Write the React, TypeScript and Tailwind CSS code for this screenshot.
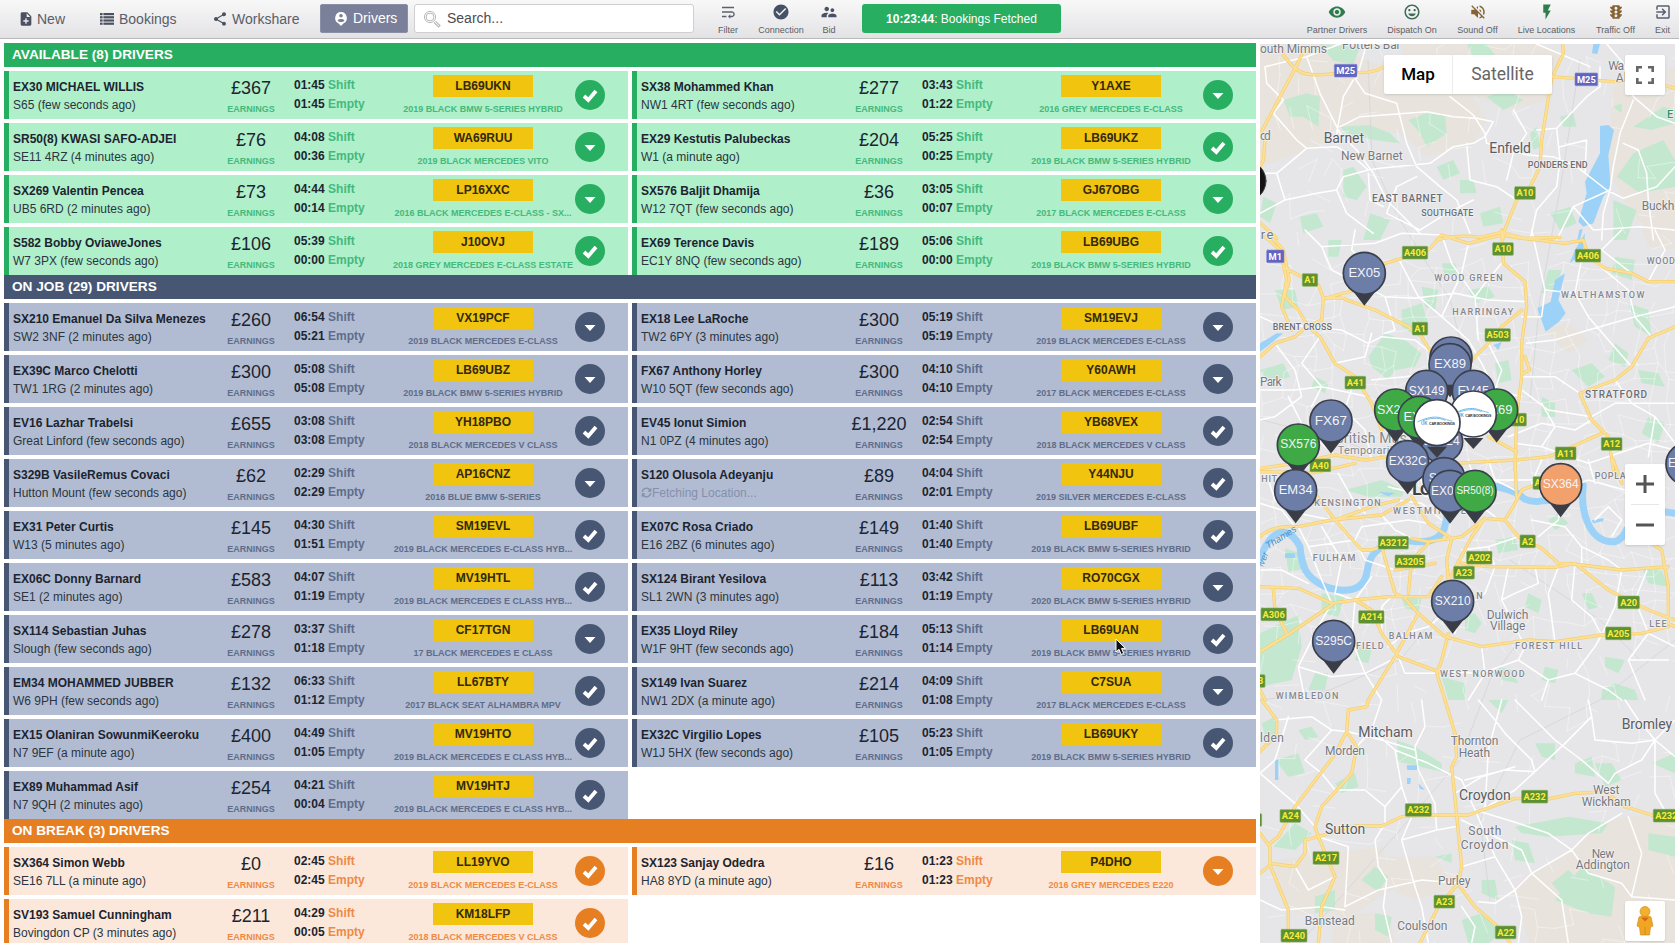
import React from "react";
import {
  MdCheckCircle,
  MdExitToApp,
  MdFlashOn,
  MdMood,
  MdNoteAdd,
  MdShare,
  MdSupervisorAccount,
  MdTraffic,
  MdVisibility,
  MdVolumeOff,
  MdWrapText,
} from "react-icons/md";

type Driver = {
  name: string;
  loc: string;
  pay: string;
  shift: string;
  empty: string;
  plate: string;
  car: string;
  ok: boolean;
};

const d = (name: string, loc: string, pay: string, shift: string, empty: string, plate: string, car: string, mark: string): Driver => ({
  name, loc, pay, shift, empty, plate, car, ok: mark === "check",
});

const available: Driver[] = [
  d("EX30 MICHAEL WILLIS", "S65 (few seconds ago)", "£367", "01:45", "01:45", "LB69UKN", "2019 BLACK BMW 5-SERIES HYBRID", "check"),
  d("SX38 Mohammed Khan", "NW1 4RT (few seconds ago)", "£277", "03:43", "01:22", "Y1AXE", "2016 GREY MERCEDES E-CLASS", "down"),
  d("SR50(8) KWASI SAFO-ADJEI", "SE11 4RZ (4 minutes ago)", "£76", "04:08", "00:36", "WA69RUU", "2019 BLACK MERCEDES VITO", "down"),
  d("EX29 Kestutis Palubeckas", "W1 (a minute ago)", "£204", "05:25", "00:25", "LB69UKZ", "2019 BLACK BMW 5-SERIES HYBRID", "check"),
  d("SX269 Valentin Pencea", "UB5 6RD (2 minutes ago)", "£73", "04:44", "00:14", "LP16XXC", "2016 BLACK MERCEDES E-CLASS - SX...", "down"),
  d("SX576 Baljit Dhamija", "W12 7QT (few seconds ago)", "£36", "03:05", "00:07", "GJ67OBG", "2017 BLACK MERCEDES E-CLASS", "down"),
  d("S582 Bobby OviaweJones", "W7 3PX (few seconds ago)", "£106", "05:39", "00:00", "J10OVJ", "2018 GREY MERCEDES E-CLASS ESTATE", "check"),
  d("EX69 Terence Davis", "EC1Y 8NQ (few seconds ago)", "£189", "05:06", "00:00", "LB69UBG", "2019 BLACK BMW 5-SERIES HYBRID", "check"),
];

const onJob: Driver[] = [
  d("SX210 Emanuel Da Silva Menezes", "SW2 3NF (2 minutes ago)", "£260", "06:54", "05:21", "VX19PCF", "2019 BLACK MERCEDES E-CLASS", "down"),
  d("EX18 Lee LaRoche", "TW2 6PY (3 minutes ago)", "£300", "05:19", "05:19", "SM19EVJ", "2019 BLACK MERCEDES E-CLASS", "down"),
  d("EX39C Marco Chelotti", "TW1 1RG (2 minutes ago)", "£300", "05:08", "05:08", "LB69UBZ", "2019 BLACK BMW 5-SERIES HYBRID", "down"),
  d("FX67 Anthony Horley", "W10 5QT (few seconds ago)", "£300", "04:10", "04:10", "Y60AWH", "2017 BLACK MERCEDES E-CLASS", "down"),
  d("EV16 Lazhar Trabelsi", "Great Linford (few seconds ago)", "£655", "03:08", "03:08", "YH18PBO", "2018 BLACK MERCEDES V CLASS", "check"),
  d("EV45 Ionut Simion", "N1 0PZ (4 minutes ago)", "£1,220", "02:54", "02:54", "YB68VEX", "2018 BLACK MERCEDES V CLASS", "check"),
  d("S329B VasileRemus Covaci", "Hutton Mount (few seconds ago)", "£62", "02:29", "02:29", "AP16CNZ", "2016 BLUE BMW 5-SERIES", "down"),
  d("S120 Olusola Adeyanju", "", "£89", "04:04", "02:01", "Y44NJU", "2019 SILVER MERCEDES E-CLASS", "check"),
  d("EX31 Peter Curtis", "W13 (5 minutes ago)", "£145", "04:30", "01:51", "SM19EVL", "2019 BLACK MERCEDES E-CLASS HYB...", "check"),
  d("EX07C Rosa Criado", "E16 2BZ (6 minutes ago)", "£149", "01:40", "01:40", "LB69UBF", "2019 BLACK BMW 5-SERIES HYBRID", "check"),
  d("EX06C Donny Barnard", "SE1 (2 minutes ago)", "£583", "04:07", "01:19", "MV19HTL", "2019 BLACK MERCEDES E CLASS HYB...", "check"),
  d("SX124 Birant Yesilova", "SL1 2WN (3 minutes ago)", "£113", "03:42", "01:19", "RO70CGX", "2020 BLACK BMW 5-SERIES HYBRID", "down"),
  d("SX114 Sebastian Juhas", "Slough (few seconds ago)", "£278", "03:37", "01:18", "CF17TGN", "17 BLACK MERCEDES E CLASS", "down"),
  d("EX35 Lloyd Riley", "W1F 9HT (few seconds ago)", "£184", "05:13", "01:14", "LB69UAN", "2019 BLACK BMW 5-SERIES HYBRID", "check"),
  d("EM34 MOHAMMED JUBBER", "W6 9PH (few seconds ago)", "£132", "06:33", "01:12", "LL67BTY", "2017 BLACK SEAT ALHAMBRA MPV", "check"),
  d("SX149 Ivan Suarez", "NW1 2DX (a minute ago)", "£214", "04:09", "01:08", "C7SUA", "2017 BLACK MERCEDES E-CLASS", "down"),
  d("EX15 Olaniran SowunmiKeeroku", "N7 9EF (a minute ago)", "£400", "04:49", "01:05", "MV19HTO", "2019 BLACK MERCEDES E CLASS HYB...", "check"),
  d("EX32C Virgilio Lopes", "W1J 5HX (few seconds ago)", "£105", "05:23", "01:05", "LB69UKY", "2019 BLACK BMW 5-SERIES HYBRID", "check"),
  d("EX89 Muhammad Asif", "N7 9QH (2 minutes ago)", "£254", "04:21", "00:04", "MV19HTJ", "2019 BLACK MERCEDES E CLASS HYB...", "check"),
];

const onBreak: Driver[] = [
  d("SX364 Simon Webb", "SE16 7LL (a minute ago)", "£0", "02:45", "02:45", "LL19YVO", "2019 BLACK MERCEDES E-CLASS", "check"),
  d("SX123 Sanjay Odedra", "HA8 8YD (a minute ago)", "£16", "01:23", "01:23", "P4DHO", "2016 GREY MERCEDES E220", "down"),
  d("SV193 Samuel Cunningham", "Bovingdon CP (3 minutes ago)", "£211", "04:29", "00:05", "KM18LFP", "2018 BLACK MERCEDES V CLASS", "check"),
];

type Theme = { bar: string; card: string; soft: string; dot: string };

const green: Theme = { bar: "bg-[#27ae60]", card: "border-[#27ae60] bg-[#afefca]", soft: "text-[#45b97c]", dot: "bg-[#27ae60]" };
const navy: Theme = { bar: "bg-[#475673]", card: "border-[#475673] bg-[#b1bcd2]", soft: "text-[#5f6c8a]", dot: "bg-[#475673]" };
const orange: Theme = { bar: "bg-[#e67e22]", card: "border-[#e67e22] bg-[#fbe8da]", soft: "text-[#ee8a45]", dot: "bg-[#e67e22]" };

function Card({ v, t }: { v: Driver; t: Theme }) {
  return (
    <div className={`flex h-12 items-center border-l-[5px] pl-1 text-[12px] text-[#1c2430] ${t.card}`}>
      <div className="flex w-[208px] flex-col gap-[2px] whitespace-nowrap pt-px leading-4">
        <span className="font-bold">{v.name}</span>
        {v.loc ? (
          <span className="text-[#2b3540]">{v.loc}</span>
        ) : (
          <span className="flex items-center text-[#8490aa]">
            <svg viewBox="0 0 24 24" className="h-[11px] w-[11px]" fill="none" stroke="currentColor" strokeWidth="3">
              <path d="M3 11a9 9 0 0 1 16-5l2 3M21 3v6h-6M21 13a9 9 0 0 1-16 5l-2-3M3 21v-6h6" />
            </svg>
            Fetching Location...
          </span>
        )}
      </div>
      <div className="flex w-[60px] flex-col items-center">
        <span className="text-[18px] leading-6">{v.pay}</span>
        <span className={`pt-[3px] text-[9px] font-bold leading-3 ${t.soft}`}>EARNINGS</span>
      </div>
      <div className="flex w-[111px] flex-col gap-[2px] pl-[13px] font-bold leading-[17px]">
        <span>{v.shift} <span className={t.soft}>Shift</span></span>
        <span>{v.empty} <span className={t.soft}>Empty</span></span>
      </div>
      <div className="flex w-[182px] flex-col items-center gap-[6px]">
        <span className="flex h-[22px] w-[100px] items-center justify-center bg-[#f1c40f] pb-px font-bold text-[#33290c]">{v.plate}</span>
        <span className={`whitespace-nowrap text-[9px] font-bold leading-3 ${t.soft}`}>{v.car}</span>
      </div>
      <div className={`ml-px flex size-[30px] items-center justify-center rounded-full ${t.dot}`}>
        {v.ok ? (
          <svg viewBox="0 0 20 20" className="size-5" fill="none" stroke="#fff" strokeWidth="3.8">
            <path d="M4 11 L8.300 15 L16 6" />
          </svg>
        ) : (
          <svg viewBox="0 0 20 20" className="size-5" fill="#fff">
            <path d="M4.5 8h11L10 14z" />
          </svg>
        )}
      </div>
    </div>
  );
}

function Section({ title, rows, t }: { title: string; rows: Driver[]; t: Theme }) {
  return (
    <section className="flex shrink-0 flex-col gap-1">
      <h2 className={`flex h-6 items-center pl-2 text-[13.65px] font-bold text-white ${t.bar}`}>{title}</h2>
      <div className="grid grid-cols-2 gap-1">
        {rows.map((v) => (
          <Card key={v.name} v={v} t={t} />
        ))}
      </div>
    </section>
  );
}

function Tool({ icon, label, box, tint }: { icon: React.ReactNode; label: string; box: string; tint: string }) {
  return (
    <div className={`flex shrink-0 flex-col items-center gap-[2px] whitespace-nowrap pt-[3px] ${box}`}>
      <span className={`text-[18px] ${tint}`}>{icon}</span>
      <span className="text-[9px] leading-[14px] text-[#5b5e66]">{label}</span>
    </div>
  );
}

function Header() {
  return (
    <header className="flex h-[39px] shrink-0 items-start border-b border-[#b9b9bb] bg-linear-to-b from-[#f8f8f9] to-[#e3e3e5] text-[14px] text-[#595d68]">
      <div className="flex h-[38px] w-20 items-center gap-[3px] pl-[18px]">
        <MdNoteAdd className="h-[16px] w-[16px] text-[#4b5160]" />
        <span>New</span>
      </div>
      <div className="flex h-[38px] w-[114px] items-center gap-[5px] pl-5">
        <svg viewBox="0 0 14 12" className="h-3 w-3.5 fill-[#4b5160]">
          {[0, 3.2, 6.4, 9.6].map((y) => (
            <g key={y}>
              <rect x="0" y={y} width="2.6" height="2.2" />
              <rect x="3.4" y={y} width="10.6" height="2.2" />
            </g>
          ))}
        </svg>
        <span>Bookings</span>
      </div>
      <div className="flex h-[38px] w-[126px] items-center gap-[4px] pl-[18px]">
        <MdShare className="h-4 w-4 text-[#4b5160]" />
        <span>Workshare</span>
      </div>
      <div className="mt-1 flex h-[29px] w-[88px] items-center gap-[6px] rounded-[2px] border border-[#8b8fa6] bg-[#7a7f9a] pl-[14px] text-white">
        <svg viewBox="0 0 12 14" className="h-3.5 w-3">
          <path d="M6 0a6 6 0 0 1 2.4 11.4L6 14 3.6 11.4A6 6 0 0 1 6 0z" fill="#fff" />
          <circle cx="6" cy="3.7" r="1.8" fill="#7a7f9a" />
          <path d="M2.6 8.4C3 6.4 9 6.4 9.4 8.4 8.2 10.4 3.8 10.4 2.6 8.4z" fill="#7a7f9a" />
        </svg>
        <span>Drivers</span>
      </div>
      <div className="ml-[6px] mt-1 flex h-[29px] w-[280px] shrink-0 items-center gap-[6px] rounded-[3px] border border-[#cfcfd2] bg-white pl-2">
        <svg viewBox="0 0 18 18" className="size-[18px]" fill="none" stroke="#b9b9bd">
          <circle cx="7" cy="7" r="5.6" strokeWidth="1" />
          <circle cx="7" cy="7" r="3.9" strokeWidth="1" />
          <path d="M11 12.5l4.6 4.4 1.4-1.4-4.6-4.4" strokeWidth="1.2" />
        </svg>
        <span className="text-[#4c4c50]">Search...</span>
      </div>
      <Tool box="ml-[13px] w-[42px]" tint="text-[#5b6070]" label="Filter" icon={<MdWrapText />} />
      <Tool box="w-[64px]" tint="text-[#475166]" label="Connection" icon={<MdCheckCircle />} />
      <Tool box="w-[32px]" tint="text-[#4b5160]" label="Bid" icon={<MdSupervisorAccount />} />
      <div className="ml-[17px] mt-1 flex h-[29px] w-[199px] shrink-0 items-center justify-center rounded-[3px] bg-[#27ae60] text-[12px] text-white">
        <b>10:23:44</b>: Bookings Fetched
      </div>
      <Tool box="ml-auto w-20" tint="text-[#2f7d4f]" label="Partner Drivers" icon={<MdVisibility />} />
      <Tool box="w-[70px]" tint="text-[#3d6b55]" label="Dispatch On" icon={<MdMood />} />
      <Tool box="w-[61px]" tint="text-[#856332]" label="Sound Off" icon={<MdVolumeOff />} />
      <Tool box="w-[77px]" tint="text-[#2f7d4f]" label="Live Locations" icon={<MdFlashOn />} />
      <Tool box="w-[61px]" tint="text-[#856332]" label="Traffic Off" icon={<MdTraffic />} />
      <Tool box="w-[33px]" tint="text-[#5b6070]" label="Exit" icon={<MdExitToApp />} />
    </header>
  );
}

/* The map is drawn as four stacked tiles, each on a grid three times finer than the page. */
type TileKey = "A" | "B" | "C" | "D";
const origin: Record<TileKey, [number, number]> = { A: [1240, 0], B: [1255, 230], C: [1255, 460], D: [1255, 700] };
const px = (k: TileKey, x: number) => origin[k][0] + x / 3;
const py = (k: TileKey, y: number) => origin[k][1] + y / 3;

const sand: Record<TileKey, string[]> = {
  A: ["M60 132H240L400 190 560 210 700 290 740 360 700 430 560 470 480 400 300 380 230 440 60 500z", "M480 132H900L960 160 930 300 800 330 640 260 500 200z", "M1120 260L1305 200V720H1240L1150 600 1100 500z"],
  B: ["M870 300l70-20 60 50-60 40z", "M1160 0h100v60l-80-10z"],
  C: [],
  D: ["M60 480L380 440 420 560 300 640 120 640 60 560z", "M780 560L960 440 1060 360 1260 330V729H820z", "M400 470h140l60 90-120 40-90-40z", "M240 640h160l20 89H230z"],
};
const parks: Record<TileKey, string[]> = {
  A: [
    "M130 300L200 280 240 290 235 380 190 350 150 350z", "M300 380L390 375 450 400 480 430 400 420 320 400z", "M505 360L560 340 615 345 620 400 560 440 540 400z",
    "M310 510L340 500 380 560 350 600 310 590z", "M240 132l120 10-20 50-60-10z", "M740 290l60-20 50 30-60 30z", "M680 132h60l30 40-60 20z", "M870 400l20-20 10 60-20 10z",
    "M1180 460L1270 420 1305 480V560L1200 580 1130 530z", "M1180 380l90-60 35 10v40l-70 20z", "M1120 320l25-10v30z", "M960 350l40-10 10 40-40 0z", "M590 500l50-20 20 40-50 20z",
    "M390 640l60 20-30 60h-50z", "M720 640l60-20 10 50-60 10z", "M930 640l60-20 20 50-50 20z", "M70 590l40 20-20 60-30-20z", "M180 650l50-10 20 40-60 20z", "M1120 600l70 30-30 90h-40z", "M660 540l40 0 10 40-50 0z",
  ],
  B: [
    "M340 380L390 310 450 330 500 370 480 410 420 420 400 450 350 410z", "M440 240l60-20 20 60-50 30-30-20z", "M15 420l70-20 20 40-60 20z", "M60 180l60 0 10 50-50 10z", "M220 30l40 0-10 50-30 0z", "M500 170l50 10-10 60-30-10z",
    "M180 440l40 20-10 30-40-20z", "M950 420l60-20 40 40-50 30z", "M1080 340l40 30-10 40-50-20z", "M880 120l40 0-20 60-40 10z", "M1120 220l60 20 10 80-50-30z", "M720 400l40-10 10 60-40 10z", "M1180 560l50 20-20 60-50-30z",
    "M860 500l40 20 0 40-40 0z", "M560 100l40 0 10 30-40 10z", "M640 180l60-10 20 30-60 20z", "M1080 80l60 10-10 60-60-20z", "M1150 420l60 10 20 40-70-10z",
  ],
  C: [
    "M270 90L380 60 450 90 440 110 340 110z", "M440 415l60 0-10 40-40-10z", "M90 265l60 20 10 40-60 10z", "M15 520L130 465 140 560 110 660 15 680z", "M200 400l70 10-20 60-50-10z", "M630 470l30-10 20 30-20 30-30-10z",
    "M720 240l60-10 10 40-60 10z", "M820 400l40 20-10 40-40-20z", "M1040 690l40-20 60 20 10 30h-110z", "M980 400l30 0 20 40-30 10z", "M1050 590l60 10-20 40-40-20z", "M1160 320l60 10 20 50-60-10z", "M560 650l70 20 0 50h-50z",
    "M870 620l40 10-10 40-40-10z", "M310 560l40 10-10 40-40-10z", "M730 620l40 10 20 40-50-10z", "M880 180l30-20 30 30-40 20z", "M180 640l40 0-10 50-50 0z",
  ],
  D: [
    "M425 120L480 140 560 190 560 215 430 185z", "M55 440L120 370 170 400 120 450z", "M320 540L360 500 400 530 370 575z", "M890 550L940 510 960 530 920 585z", "M900 600L980 500 1080 560 1070 650 1000 640z", "M780 380L940 350 1060 370 1040 400 880 410 800 400z",
    "M60 180l70-20 20 60-50 10z", "M240 250l60-30 10 40-50 20z", "M680 540l40 0 10 60-50-20z", "M770 420l50 10 20 60-60-10z", "M1020 190l50 0 30 50-50 20z", "M20 70l40-20 10 50-30 40z", "M700 0h60l-20 40z", "M840 130l60 0 0 50-40-10z",
    "M960 190l50-20 10 60-60-10z", "M180 590l60-20 0 60-60 10z", "M620 660l60-20 60 60-40 29h-60z", "M1180 400l80 10v60l-80-20z", "M130 90l40-10 20 30-40 10z", "M360 640l50 10-10 60-40-20z", "M1120 640l60-20 40 40-50 40z", "M540 470l50-10 0 30z", "M1190 190l70-30v60z",
  ],
};
const lakes: Record<TileKey, string[]> = {
  A: ["M1080 378L1105 375 1122 390 1105 465 1112 560 1090 590 1060 670 1030 680 1015 665 1040 580 1035 545 1080 460z", "M1060 132h20l-8 30-16-2z", "M1018 690l10-4-8 34h-8z"],
  B: ["M900 150l30-20-20 80 22 40-20 25-40 30-25-70 40-20z", "M15 340l50-30 20 0-50 40-20 15z", "M960 60l30-50-6 60-40 30z", "M715 345l25-10-10 25z"],
  C: ["M90 280h30v14h-30z", "M370 95l50 4-20 10z", "M1010 180l36-6-2 10-30 6z"],
  D: ["M455 196h32v14h-30z", "M456 234h12l-2 18h-10z", "M490 250l20 20-16-4z", "M60 180l10 0 0 60-10 0z"],
};
const yellow: Record<TileKey, string[]> = {
  A: ["M130 165Q165 215 200 222T330 215Q390 225 435 200", "M185 165L160 215 62 400M75 420L70 480 60 500", "M935 230L1120 245Q1220 235 1305 265", "M968 132L970 160 935 235 905 420 900 500 870 560 830 600 790 700 788 720", "M590 720Q650 702 720 712L785 697 850 715 960 712", "M60 668L110 715"],
  B: [
    "M30 20L75 60 95 150 80 230 110 300M48 18L85 60 103 150 88 200", "M90 115L190 165 205 203 270 205", "M205 205L200 270 155 290 120 320 60 340 15 380", "M90 200L130 240 160 290 195 320 240 400 300 440 350 520 380 600",
    "M210 205L300 180 390 100 440 85 520 60 560 15 640 40 740 15 800 25 930 40 985 30 1000 80 1050 115 1130 130 1180 155 1260 155", "M270 208L360 240 460 290 500 320 530 370",
    "M740 0L745 100 810 155 815 230 800 340 800 440 785 560 780 720", "M800 240L740 290 700 340 650 390", "M1260 290L1180 325 1130 410 1080 450 1000 480 975 490 1010 570 1060 620 1075 720",
    "M600 700L780 690 880 680 930 660 1040 610", "M15 715L120 700 240 675 330 690 400 680", "M810 380l14 40-20 10", "M700 620L785 665",
  ],
  C: [
    "M15 35L180 38 300 10", "M15 230Q50 195 130 200L230 180 380 165 460 120", "M160 75L240 180 320 270 350 270", "M240 180L350 140 430 120", "M350 270L380 260 420 400 440 410", "M470 110L520 190 590 235 620 230 690 175 750 180 780 130 800 90 840 75",
    "M470 235L520 245 590 235", "M590 235L575 300 580 360", "M560 400L650 230 690 175", "M750 180L790 230 860 265 910 310 980 315 1100 330 1240 320", "M620 310L700 320 900 322 960 310 1060 390 1180 450 1260 480", "M520 250L470 300 460 400",
    "M15 380L130 385 230 430 300 420 400 410 520 410 560 350", "M15 575L120 510 230 435", "M300 420L350 450 380 520 430 590 550 635", "M450 415L490 460 570 530 680 560 820 540 900 545 1040 525 1160 520 1240 500",
    "M490 460L420 590 340 720", "M580 520L560 600 545 640 570 720", "M1190 250L1220 270 1240 380 1240 490 1260 500", "M55 385L60 450 95 520", "M780 0L785 120", "M1075 0L1100 70", "M15 690L30 720", "M540 310L420 330",
  ],
  D: [
    "M20 0L65 60 65 100 15 155", "M340 0L335 20 280 30 275 95 235 170 120 320 70 410 45 430", "M275 95L305 140 290 220 200 320 180 380 190 410 240 530 200 620 190 729",
    "M15 400L45 440 45 490 120 500 150 460 150 420 190 410 300 378 380 378 440 350 540 345 640 345 780 295 880 297 960 280 1050 275 1110 320 1190 345 1260 350",
    "M15 520L45 495 100 630 100 729", "M570 0L600 100 605 170 590 200 605 345 620 500 610 550 550 620 495 729", "M615 560L660 620 740 690 765 729",
  ],
};
const white: Record<TileKey, string[]> = {
  A: [
    "M75 200L80 250 130 300 100 340 170 420 200 445 290 440 340 470 385 510 420 505 570 490 640 440 700 430 735 410 760 365 710 355", "M200 170L240 280 300 400 350 450 400 520 440 600 540 700", "M340 240L310 290 290 400",
    "M345 235L375 280 470 310 500 430 530 500 600 560 650 600 690 700", "M300 380L360 350 560 335 640 350 710 355", "M630 290L700 345 735 400 740 430 860 465 940 470 1010 500 1100 570 1150 595 1250 560 1305 500",
    "M60 520L110 520 200 445", "M110 520L135 600 230 580 290 570 310 530 385 510", "M135 600L60 640", "M890 132L1050 200", "M1100 132L1150 190 1180 290 1250 350 1305 370", "M1180 300L1140 400 1120 500 1110 570 1090 640 1085 720",
    "M890 390L950 385 1040 290 1080 260 1080 200", "M950 385L960 480 950 560 890 630 870 720", "M1035 520L1040 420 960 440", "M1150 430L1195 450 1220 520 1225 600 1240 720", "M1110 570L1000 620 950 720", "M680 430L690 540 770 560 830 600",
    "M430 620L390 600 385 520", "M530 530L470 560 440 640 540 690 620 640 700 600", "M290 570L320 640 400 700", "M820 330L860 400 820 460 800 540", "M1000 620L1060 690 1200 680 1305 690", "M75 200L200 170 300 132", "M380 132L350 235",
  ],
  B: [
    "M150 0L200 50 360 40 440 10 560 15", "M200 50L230 120 390 200 420 300 390 310", "M430 85L490 200 560 260 640 330 680 400", "M560 15L590 100 660 200 670 330", "M640 40L620 130 560 260", "M815 215L700 210 600 190 480 205 390 200", "M830 0L870 180 860 260 800 260",
    "M740 100L690 160 660 200", "M870 180L960 190 1000 260 1060 330 1130 410", "M985 60L960 190", "M1000 80L1120 180 1140 260 1190 320", "M1260 230L1140 260 1000 300", "M815 340L900 330 1000 300", "M800 440L900 440 975 490", "M800 480L880 540 1010 560 1080 520 1260 520",
    "M1080 450L1130 520 1200 560 1260 640", "M160 290L260 300 340 340 380 320 480 330 530 370", "M15 260L60 280 160 290", "M60 340L120 420 140 500 60 560 15 570", "M195 320L140 400 200 470 170 530", "M240 400L330 380 350 310", "M350 450L450 440 520 430", "M15 480L120 480 200 470 340 500",
    "M300 440L270 540 330 600 350 690", "M680 400L720 480 800 500", "M700 340L740 420 720 480", "M760 620L860 580 960 600 1010 570", "M780 640L860 650 900 590 860 520", "M860 650L1000 700 1180 640 1260 660", "M1100 0L1040 60 1130 130", "M1180 155L1230 60 1200 0", "M300 0L290 60 330 100", "M100 500L150 600 240 675", "M1200 560L1180 680",
  ],
  C: [
    "M40 60L60 120 130 160 230 180", "M250 40L300 130 330 160", "M15 130L80 150 120 200", "M130 200L160 260 200 360 230 430", "M200 200L260 300 240 400 300 420", "M300 240L330 300 420 330", "M160 260L300 240 320 200 460 180 520 190",
    "M380 165L420 210 470 235", "M420 120L500 130 560 180", "M420 400L380 440 380 520", "M15 330L80 330 160 370", "M230 430L190 500 130 620 150 720", "M300 420L290 540 330 640 430 590", "M130 620L230 650 330 640 380 720", "M350 350L300 420",
    "M620 270L700 260 790 230", "M700 260L720 320 690 400 620 450 600 520", "M760 320L740 420 800 540", "M840 320L850 370 780 400 740 420", "M910 322L880 400 900 545", "M960 310L950 420 1010 470 1040 525", "M1100 330L1080 440 1040 525", "M1180 320L1140 420 1180 520 1120 600 1170 720",
    "M830 180L930 200 980 260 980 315", "M930 60L910 180 850 230", "M980 260L1060 300 1100 330", "M680 560L690 640 640 720", "M550 635L680 640 790 600 820 540", "M790 600L880 660 960 640 1020 560 1040 525", "M880 660L860 720", "M960 640L1060 690 1100 720", "M430 590L450 640 545 640",
    "M590 20L700 60 820 60 950 50", "M640 0L680 140 720 170", "M700 0L720 60 780 90", "M860 0L830 70 880 110", "M900 100L1000 60 1110 90", "M1000 0L1020 70", "M1020 180L1060 140 1100 180 1070 230", "M480 20L520 110 600 120", "M400 80L520 110", "M1260 560L1180 520", "M1240 600L1120 600", "M580 450L520 500 450 520 400 560",
  ],
  D: [
    "M60 60L170 50 230 90 280 95", "M230 90L150 180 200 220 240 270 330 270 390 320 390 370 360 420 370 500 395 540 385 620 410 729", "M380 0L350 90 420 150 440 260 390 320", "M350 90L305 140", "M420 150L520 190 620 240 660 330", "M500 0L510 80 480 140 490 210 540 310 545 390",
    "M440 260L470 350 440 420 545 390 600 380", "M670 0L720 60 750 100 830 180 840 215 780 270 680 330", "M740 0L700 150 690 330", "M660 330L720 470 780 570 830 520 950 450 1000 400 1100 340", "M660 330L790 370 880 400 950 450", "M780 0L900 120 980 180 1060 250", "M840 215L930 130 1010 50 1000 0",
    "M1010 50L1020 120 1130 130 1200 120 1260 60", "M1200 120L1200 280 1240 350", "M1060 250L1080 220 1160 180 1200 120", "M1110 0L1150 60 1200 120 1260 170", "M15 220L120 310 180 380", "M190 410L280 440 270 620 370 570 500 540 610 550", "M15 600L80 630 200 620 270 630", "M440 420L480 560 500 620 520 729",
    "M620 500L720 470", "M780 570L720 610 670 605", "M780 570L800 650 790 729", "M830 520L920 600 940 729", "M950 450L1000 520 1100 550 1130 590 1260 600", "M1120 350L1160 460 1130 590", "M120 500L160 570 240 530", "M620 360L800 450 830 520", "M100 50L60 180 15 220", "M620 620L660 680 650 729", "M630 240L750 210 840 215", "M600 280L680 230 780 200", "M480 150L380 120 280 95",
  ],
};
const thames = "M8 310Q40 225 75 218T135 260C140 320 150 350 210 380C270 400 325 395 335 340C342 300 350 280 380 262Q430 235 480 245Q550 250 568 205L585 130Q610 70 700 75Q780 90 800 110T870 122Q950 120 985 75C975 150 1000 250 1080 245C1130 230 1120 130 1190 150L1262 160";

/* Deterministic web of side streets between the named roads. */
const streets = (() => {
  let s = 7;
  const rnd = () => ((s = (s * 16807) % 2147483647) / 2147483647);
  const step = 17;
  const cols = 26;
  const rowsN = 55;
  const pts: [number, number][][] = [];
  for (let r = 0; r < rowsN; r++) {
    pts.push([]);
    for (let c = 0; c < cols; c++) pts[r].push([1255 + c * step + rnd() * 13, 38 + r * step + rnd() * 13]);
  }
  let out = "";
  for (let r = 0; r < rowsN - 1; r++)
    for (let c = 0; c < cols - 1; c++) {
      const density = r > 12 && r < 35 ? 0.65 : 0.18;
      const [x, y] = pts[r][c];
      if (rnd() < density) out += `M${x.toFixed(1)} ${y.toFixed(1)}L${pts[r][c + 1][0].toFixed(1)} ${pts[r][c + 1][1].toFixed(1)}`;
      if (rnd() < density) out += `M${x.toFixed(1)} ${y.toFixed(1)}L${pts[r + 1][c][0].toFixed(1)} ${pts[r + 1][c][1].toFixed(1)}`;
    }
  return out;
})();

/* tile, left, right, baseline, text, size, weight, colour */
type Label = [TileKey, number, number, number, string, number, number, string];
const town = "#5b5d63";
const area = "#85878f";
const labels: Label[] = [
  ["A", 60, 261, 158, "outh Mimms", 12, 400, "#77797f"], ["A", 306, 482, 147, "Potters Bar", 12, 400, "#77797f"], ["A", 251, 372, 428, "Barnet", 14, 400, town], ["A", 303, 488, 480, "New Barnet", 12, 400, "#77797f"],
  ["A", 748, 873, 460, "Enfield", 14, 400, town], ["A", 863, 1043, 504, "PONDERS END", 9, 500, "#6c6e75"], ["A", 396, 608, 606, "EAST BARNET", 10, 500, "#6c6e75"], ["A", 544, 700, 648, "SOUTHGATE", 9, 500, "#6c6e75"],
  ["A", 1205, 1303, 631, "Buckh", 12, 400, "#77797f"], ["A", 1105, 1152, 210, "Wa", 12, 400, "#77797f"], ["A", 1127, 1160, 247, "Al", 12, 400, "#77797f"], ["A", 60, 92, 420, "od", 12, 400, "#77797f"], ["A", 62, 100, 716, "re", 13, 400, "#77797f"], ["A", 1281, 1300, 354, "E", 11, 500, "#3d8f62"],
  ["B", 538, 743, 152, "WOOD GREEN", 9, 500, area], ["B", 1175, 1260, 103, "WOOD", 9, 500, area], ["B", 918, 1168, 203, "WALTHAMSTOW", 9, 500, area], ["B", 592, 775, 256, "HARRINGAY", 9, 500, area], ["B", 53, 231, 299, "BRENT CROSS", 9, 500, "#6c6e75"], ["B", 990, 1176, 504, "STRATFORD", 10, 500, "#6c6e75"],
  ["B", 15, 80, 469, "Park", 12, 400, "#77797f"], ["B", 240, 455, 640, "British Mus", 14, 400, "#85868c"], ["B", 248, 412, 673, "Temporaril", 11, 400, "#85868c"],
  ["C", 19, 66, 66, "HIT", 9, 500, area], ["C", 178, 377, 138, "KENSINGTON", 9, 500, area], ["C", 414, 655, 163, "WESTMINSTER", 9, 500, area], ["C", 173, 301, 304, "FULHAM", 9, 500, area], ["C", 1019, 1112, 58, "POPLA", 9, 500, area], ["C", 470, 530, 105, "Lo", 21, 500, "#3f4044"],
  ["C", 695, 820, 476, "Dulwich", 12, 400, "#77797f"], ["C", 705, 811, 511, "Village", 12, 400, "#77797f"], ["C", 1183, 1235, 500, "LEE", 9, 500, area], ["C", 401, 532, 538, "BALHAM", 9, 500, area], ["C", 303, 386, 567, "FIELD", 9, 500, area], ["C", 780, 981, 568, "FOREST HILL", 9, 500, area],
  ["C", 664, 682, 416, "N", 9, 500, area], ["C", 555, 809, 650, "WEST NORWOOD", 9, 500, area], ["C", 62, 250, 718, "WIMBLEDON", 9, 500, area],
  ["D", 1100, 1251, 88, "Bromley", 14, 400, town], ["D", 310, 473, 110, "Mitcham", 14, 400, town], ["D", 15, 87, 125, "lden", 12, 400, "#77797f"], ["D", 210, 330, 164, "Morden", 12, 400, "#77797f"], ["D", 587, 730, 134, "Thornton", 12, 400, "#77797f"], ["D", 611, 705, 170, "Heath", 12, 400, "#77797f"],
  ["D", 612, 767, 299, "Croydon", 14, 400, town], ["D", 1014, 1093, 281, "West", 12, 400, "#77797f"], ["D", 980, 1127, 317, "Wickham", 12, 400, "#77797f"], ["D", 210, 331, 402, "Sutton", 14, 400, town], ["D", 640, 739, 406, "South", 12, 400, "#77797f"], ["D", 617, 760, 446, "Croydon", 12, 400, "#77797f"],
  ["D", 1010, 1078, 474, "New", 12, 400, "#77797f"], ["D", 962, 1125, 508, "Addington", 12, 400, "#77797f"], ["D", 549, 646, 554, "Purley", 12, 400, "#77797f"], ["D", 149, 299, 674, "Banstead", 12, 400, "#77797f"], ["D", 427, 577, 689, "Coulsdon", 12, 400, "#77797f"],
];

/* tile, centre x, centre y, width, text */
const shields: [TileKey, number, number, number, string][] = [
  ["A", 317, 212, 68, "M25"], ["A", 1039, 238, 68, "M25"], ["A", 855, 579, 62, "A10"],
  ["B", 61, 79, 52, "M1"], ["B", 165, 150, 46, "A1"], ["B", 480, 68, 76, "A406"], ["B", 744, 57, 62, "A10"], ["B", 999, 77, 76, "A406"], ["B", 495, 296, 46, "A1"], ["B", 728, 315, 76, "A503"], ["B", 301, 458, 62, "A41"], ["B", 783, 569, 62, "A10"], ["B", 1070, 642, 62, "A12"], ["B", 932, 670, 62, "A11"], ["B", 196, 706, 62, "A40"],
  ["C", 415, 248, 90, "A3212"], ["C", 465, 304, 90, "A3205"], ["C", 673, 293, 76, "A202"], ["C", 627, 338, 62, "A23"], ["C", 818, 244, 46, "A2"], ["C", 864, 69, 60, "A13"], ["C", 1121, 427, 64, "A20"], ["C", 1090, 520, 76, "A205"], ["C", 56, 463, 76, "A306"], ["C", 349, 471, 76, "A214"], ["C", 8, 663, 44, "A3"],
  ["D", 106, 348, 62, "A24"], ["D", 490, 330, 78, "A232"], ["D", 839, 290, 78, "A232"], ["D", 1234, 347, 78, "A232"], ["D", 213, 474, 78, "A217"], ["D", 568, 605, 62, "A23"], ["D", 117, 707, 78, "A240"], ["D", 752, 697, 62, "A22"], ["D", 5, 360, 30, ""],
];

const blue = "#6c7da8";
const leaf = "#3faa45";
/* tile, centre x, centre y, text, fill, text size */
const pins: [TileKey, number, number, string, string, number][] = [
  ["B", 328, 130, "EX05", blue, 13], ["B", 588, 384, "", blue, 13], ["B", 585, 404, "EX89", blue, 13], ["B", 515, 484, "SX149", blue, 12], ["B", 655, 484, "EV45", blue, 13],
  ["B", 560, 635, "EX124", blue, 12], ["B", 725, 540, "EX69", leaf, 13], ["B", 422, 540, "SX269", leaf, 12.5], ["B", 493, 562, "EX29", leaf, 13], ["B", 655, 552, "logo", "#fff", 0],
  ["B", 458, 695, "EX32C", blue, 12], ["B", 546, 578, "logo", "#fff", 0], ["B", 228, 573, "FX67", blue, 13.5], ["B", 130, 645, "SX576", leaf, 12], ["C", 567, 56, "SX35", blue, 12.5], ["C", 585, 94, "EX06C", blue, 12],
  ["C", 660, 94, "SR50(8)", leaf, 10], ["C", 122, 92, "EM34", blue, 13], ["C", 917, 74, "SX364", "#f2a06c", 12], ["C", 593, 424, "SX210", blue, 12], ["C", 236, 544, "S295C", blue, 12], ["B", 1296, 702, "EX07C", blue, 12],
];

function Pin({ x, y, text, fill, size }: { x: number; y: number; text: string; fill: string; size: number }) {
  const logo = text === "logo";
  return (
    <g transform={`translate(${x} ${y})`}>
      <path d={logo ? "M-10 24L10 24 0 35z" : "M-12 17L12 17 0 32.5z"} fill="#3a3d45" />
      <circle r={logo ? 23 : 21} fill={fill} stroke="#3a3f4b" strokeWidth="1.7" />
      {logo ? (
        <g>
          <path d="M-19 -1C-14 -3 -10 -5 -4 -5.5 4 -6 6 -3.5 15 -1.5M-14 -2C-9 -4 1 -6 8 -2.5" fill="none" stroke="#6db4e0" strokeWidth="0.9" />
          <text x="-16" y="2.5" fontSize="4.5" fill="#4ba5dc" fontWeight="700">UK</text>
          <text x="-8" y="2.5" fontSize="3.6" fill="#333" fontWeight="700" textLength="26">CAR BOOKINGS</text>
        </g>
      ) : (
        <text y={size * 0.28} fontSize={size} fill="#f2f4f8" textAnchor="middle">{text}</text>
      )}
    </g>
  );
}

function MapArt() {
  const tiles: TileKey[] = ["A", "B", "C", "D"];
  const layer = (set: Record<TileKey, string[]>) =>
    tiles.map((k) => (
      <g key={k} transform={`translate(${origin[k][0]} ${origin[k][1]}) scale(.33333)`}>
        <path d={set[k].join("")} />
      </g>
    ));
  return (
    <svg viewBox="1260 44 415 899" className="block h-[899px] w-[415px] bg-[#e6e6e8]" strokeLinejoin="round" strokeLinecap="round" fontFamily="'Liberation Sans', Arial, sans-serif">
      <g fill="#e8e3dd">{layer(sand)}</g>
      <g fill="#c4e7cf">{layer(parks)}</g>
      <g fill="none" stroke="#d3d4da" strokeWidth="0.8">
        <path d="M1368 60L1372 160 1400 220 1450 300 1470 380M1580 60L1560 190 1540 300 1530 400M1300 943L1400 830 1460 760 1490 680 1520 640M1490 900L1480 820 1520 740 1600 700 1675 640M1262 420L1340 440 1420 470M1510 560L1600 620 1640 660M1262 700L1330 690 1400 660 1450 600" />
      </g>
      <path d={streets} fill="none" stroke="#fff" strokeWidth="0.9" opacity="0.45" />
      <g fill="#9dd2f8">{layer(lakes)}</g>
      <g transform="translate(1255 460) scale(.33333)">
        <path d={thames} fill="none" stroke="#9dd2f8" strokeWidth="21" />
      </g>
      <g fill="none" stroke="#fff" strokeWidth="4.6">{layer(white)}</g>
      <g fill="none" stroke="#f3cf70" strokeWidth="10">{layer(yellow)}</g>
      <g fill="none" stroke="#fde096" strokeWidth="6">{layer(yellow)}</g>
      <text fontSize="9" fill="#4a90c8" fontStyle="italic" transform="translate(1263 567) rotate(-68)">iver</text>
      <text fontSize="9.5" fill="#4a90c8" fontStyle="italic" transform="translate(1268 549) rotate(-32)">Thames</text>
      <g fontFamily="Roboto, sans-serif">
        {labels.map(([k, l, r, y, s, size, w, c]) => (
          <text key={k + s + y} x={px(k, l)} y={py(k, y)} textLength={(r - l) / 3} fontSize={size} fontWeight={w} fill={c} stroke="#f1f1f2" strokeWidth="1.6" paintOrder="stroke">{s}</text>
        ))}
        {shields.map(([k, x, y, w, s]) => {
          const m = s.startsWith("M");
          return (
            <g key={k + x + y}>
              <rect x={px(k, x - w / 2)} y={py(k, y - 19)} width={w / 3} height={12.7} rx="1" fill={m ? "#6065c0" : "#5d9032"} stroke={m ? "#8488d4" : "#86ad5d"} strokeWidth="0.6" />
              <text x={px(k, x)} y={py(k, y + 10)} fontSize="9.3" fontWeight="700" textAnchor="middle" fill={m ? "#fff" : "#f6ec3c"}>{s}</text>
            </g>
          );
        })}
      </g>
      <circle cx="1246" cy="181" r="20" fill="#141414" stroke="#444" />
      {pins.map(([k, x, y, s, f, size]) => (
        <Pin key={k + x + y} x={px(k, x)} y={py(k, y)} text={s} fill={f} size={size} />
      ))}
    </svg>
  );
}

function MapPanel() {
  return (
    <div className="relative mt-px h-[899px] w-[415px] shrink-0 overflow-hidden font-[Roboto,sans-serif]">
      <MapArt />
      <div className="absolute left-[124px] top-[11px] flex h-[39px] w-[168px] items-center rounded-[2px] bg-white text-[17px] shadow-sm">
        <span className="flex h-full w-[69px] items-center justify-center border-r border-[#ececec] font-medium text-black">Map</span>
        <span className="flex-1 text-center text-[17.5px] text-[#666]">Satellite</span>
      </div>
      <div className="absolute right-[10px] top-[11px] flex size-10 items-center justify-center rounded-[2px] bg-white shadow-sm">
        <svg viewBox="0 0 18 18" className="size-[18px]" fill="none" stroke="#666" strokeWidth="2.6">
          <path d="M1.3 6V1.3H6M12 1.3h4.7V6M16.7 12v4.7H12M6 16.7H1.3V12" />
        </svg>
      </div>
      <div className="absolute right-[10px] top-[420px] flex h-[81px] w-10 flex-col items-center rounded-[2px] bg-white shadow-sm">
        <svg viewBox="0 0 18 18" className="mt-[11px] size-[18px]" stroke="#555" strokeWidth="3">
          <path d="M0 9h18M9 0v18" />
        </svg>
        <span className="mt-[11px] h-px w-7 bg-[#e6e6e6]" />
        <svg viewBox="0 0 18 18" className="mt-[11px] size-[18px]" stroke="#555" strokeWidth="3">
          <path d="M0 9h18" />
        </svg>
      </div>
      <div className="absolute right-[10px] top-[857px] flex size-10 items-center justify-center rounded-[2px] bg-white shadow-sm">
        <svg viewBox="0 0 18 30" className="h-[30px] w-[18px]">
          <path d="M3 11Q9 7.500 15 11L17 20 14.500 21 13.500 29H4.500L3.500 21 1 20z" fill="#f0a623" stroke="#c98517" strokeWidth="0.6" />
          <path d="M5 11.500L9 15.500 13 11.500" fill="#d9631e" />
          <path d="M9 21v8" stroke="#c98517" strokeWidth="0.8" />
          <circle cx="9" cy="5.500" r="5" fill="#f4b02c" stroke="#c98517" strokeWidth="0.6" />
        </svg>
      </div>
    </div>
  );
}

export default function App() {
  return (
    <div className="relative flex h-[943px] w-[1679px] flex-col overflow-hidden bg-white font-['Liberation_Sans',Arial,sans-serif]">
      <Header />
      <main className="flex min-h-0 flex-1 gap-1 overflow-hidden pl-1 pt-1">
        <div className="flex w-[1252px] shrink-0 flex-col">
          <Section title="AVAILABLE (8) DRIVERS" rows={available} t={green} />
          <Section title="ON JOB (29) DRIVERS" rows={onJob} t={navy} />
          <Section title="ON BREAK (3) DRIVERS" rows={onBreak} t={orange} />
        </div>
        <MapPanel />
      </main>
      <svg viewBox="0 0 12 18" className="absolute left-[1115px] top-[638px] h-[18px] w-3">
        <path d="M1 1V14L4 11.300 6.200 16.500 8.700 15.400 6.500 10.400H10.500z" fill="#111" stroke="#fff" strokeWidth="1" />
      </svg>
    </div>
  );
}
